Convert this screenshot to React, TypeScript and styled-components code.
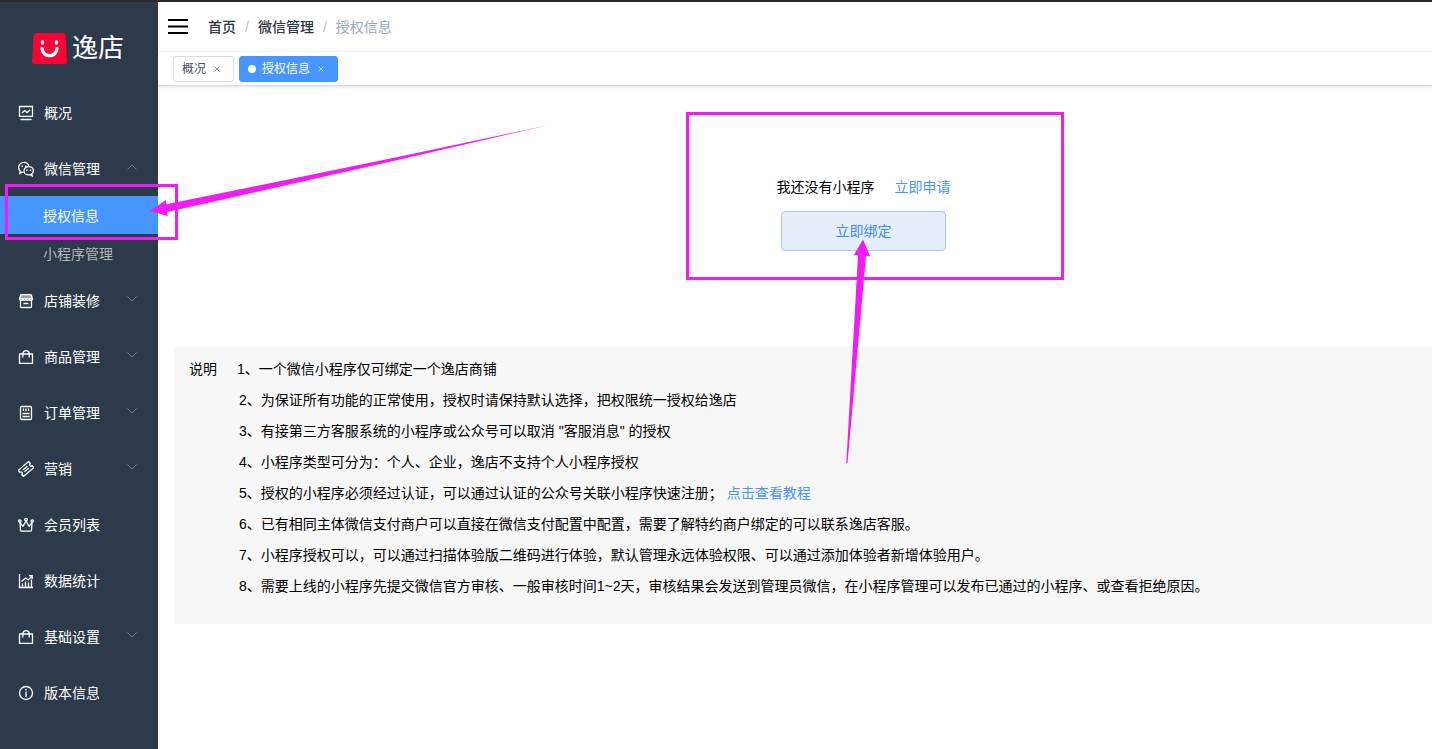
import React from 'react';
import styled, { createGlobalStyle } from 'styled-components';

const GlobalStyle = createGlobalStyle`
  *, *::before, *::after { box-sizing: border-box; }
  body {
    margin: 0;
    background: #fff;
    color: #000;
    font-family: "Liberation Sans", "Noto Sans CJK SC", sans-serif;
    font-size: 14px;
    overflow: hidden;
  }
  button { font-family: inherit; cursor: pointer; }
  a { text-decoration: none; }
`;

const Page = styled.div`
  position: relative;
  display: flex;
  min-height: 100vh;
  border-top: 2px solid #2b2b2b;
  overflow: hidden;
`;

const Sidebar = styled.aside`
  flex: 0 0 158px;
  background: #2d3a4b;
`;

const Brand = styled.a`
  display: flex;
  align-items: center;
  gap: 5px;
  height: 82px;
  padding: 10px 0 0 32px;
  color: #fff;
  font-size: 26px;
  line-height: 36px;
`;

const MenuItem = styled.a`
  display: flex;
  align-items: center;
  height: 56px;
  padding: 2px 20px 0 18px;
  color: #fff;
  line-height: 20px;
`;

const MenuIcon = styled.svg`
  flex: none;
  width: 16px;
  height: 16px;
  margin-right: 10px;
  fill: none;
  stroke: #fff;
  stroke-width: 1.3;
`;

const MenuLabel = styled.span`
  flex: 1;
`;

const Chevron = styled.svg`
  width: 12px;
  height: 12px;
  margin-bottom: 4px;
  fill: none;
  stroke: #727a86;
`;

const SubItem = styled.a<{ $active?: boolean }>`
  display: flex;
  align-items: center;
  height: 38px;
  padding: 2px 0 0 43px;
  line-height: 20px;
  color: ${(p) => (p.$active ? '#fff' : '#b3b5b8')};
  background: ${(p) => (p.$active ? '#4796ff' : 'transparent')};
`;

const Main = styled.main`
  flex: 1;
  min-width: 0;
`;

const Header = styled.header`
  display: flex;
  align-items: center;
  height: 50px;
  padding-left: 10px;
  border-bottom: 1px solid #f3f4f6;
`;

const MenuToggle = styled.button`
  display: flex;
  padding: 0;
  margin-right: 20px;
  border: 0;
  background: none;
`;

const Breadcrumb = styled.nav`
  display: flex;
  line-height: 20px;
`;

const Crumb = styled.a`
  color: #303643;
  font-weight: 500;
`;

const CurrentCrumb = styled.span`
  color: #97a8be;
`;

const Separator = styled.span`
  margin: 0 9px;
  color: #b8bdc6;
`;

const Tabs = styled.div`
  display: flex;
  align-items: center;
  gap: 5px;
  height: 34px;
  padding-left: 15px;
  border-bottom: 1px solid #d8dce5;
  box-shadow: 0 1px 3px rgba(0, 0, 0, 0.12);
`;

const Tab = styled.div<{ $active?: boolean }>`
  display: flex;
  align-items: center;
  height: 26px;
  padding: 1px 8px 0;
  border: 1px solid ${(p) => (p.$active ? '#4796ff' : '#d8dce5')};
  border-radius: 3px;
  background: ${(p) => (p.$active ? '#4796ff' : '#fff')};
  color: ${(p) => (p.$active ? '#fff' : '#495060')};
  font-size: 12px;
  line-height: 24px;
`;

const TabDot = styled.span`
  width: 8px;
  height: 8px;
  margin-right: 6px;
  border-radius: 50%;
  background: #fff;
`;

const TabClose = styled.button`
  display: flex;
  align-items: center;
  justify-content: center;
  width: 16px;
  height: 16px;
  margin-left: 3px;
  padding: 0;
  border: 0;
  background: none;
  color: inherit;
  opacity: 0.75;
`;

const BindSection = styled.section`
  display: flex;
  flex-direction: column;
  align-items: center;
  gap: 14px;
  height: 260px;
  padding: 91px 0 0 137px;
`;

const BindPrompt = styled.div`
  display: flex;
  gap: 20px;
  line-height: 20px;
`;

const TextLink = styled.a`
  color: #4796ff;
`;

const BindButton = styled.button`
  width: 165px;
  height: 40px;
  padding: 0 0 2px;
  border: 1px solid #a0cbfb;
  border-radius: 4px;
  background: #e5eefa;
  color: #3d8bf8;
  font-size: 14px;
`;

const Notes = styled.section`
  display: flex;
  gap: 20px;
  margin-left: 16px;
  padding: 8px 15px 22px;
  background: #f7f7f7;
  line-height: 31px;
`;

const NotesTitle = styled.h2`
  flex: none;
  margin: 0;
  font-size: 14px;
  font-weight: 400;
`;

const NotesList = styled.ul`
  margin: 0;
  padding: 0 0 0 2px;
  list-style: none;

  li:first-child { margin-left: -2px; }
`;

const InlineLink = styled(TextLink)`
  margin-left: 4px;
`;

const Annotations = styled.svg`
  position: absolute;
  top: -2px;
  left: 0;
  pointer-events: none;
`;

const bag = (
  <>
    <path d="M1.500 5h13v9.400h-13z" />
    <path d="M4.800 8.500V4.800a3.200 3.200 0 0 1 6.400 0v3.700" />
  </>
);

const icons: Record<string, React.ReactNode> = {
  overview: (
    <>
      <path d="M1.500 1.500h13v9.900h-13zM2.500 14.500h11" />
      <path d="M4 8l2.800-2.600L9 7.600 12 5" />
    </>
  ),
  wechat: (
    <>
      <path d="M5.400 11.400c-.7 0-1.200-.1-1.800-.3L1.900 12.300l.4-2.100C1.200 9.300.6 8 .6 6.500.6 3.700 2.900 1.300 5.800 1.300c2.600 0 4.700 1.500 5.100 4" />
      <path d="M10.700 5.600c2.600 0 4.700 1.800 4.700 4.100 0 1.300-.6 2.300-1.600 3l.4 2.200-1.800-1.200c-.5.200-1.100.2-1.700.2-2.600 0-4.700-1.900-4.700-4.200s2.100-4.100 4.700-4.100z" />
      <path d="M3.600 5.200H5M7 5.200h1.400M8.200 9.300h1.400M11.800 9.300h1.400" strokeWidth="1.500" />
    </>
  ),
  shop: (
    <>
      <path d="M3.500 1.600h9a1 1 0 0 1 1 .8l.9 3.400H1.600l.9-3.400a1 1 0 0 1 1-.8z" fill="#ffffff88" />
      <path d="M1.600 5.800c0 2.200 3.200 2.200 3.200 0 0 2.200 3.200 2.200 3.200 0 0 2.200 3.200 2.200 3.200 0 0 2.200 3.200 2.200 3.200 0M2.500 7.500v6a1 1 0 0 0 1 1h9a1 1 0 0 0 1-1v-6M5.500 10.500h5" />
    </>
  ),
  bag,
  order: (
    <>
      <rect x="2.500" y="1.500" width="11" height="13" rx="1.200" />
      <path d="M5.500 3.500v2.500M8 3.500v2.500M10.500 3.500v2.500M4.500 8.500h7M4.500 11.500h7" />
    </>
  ),
  ticket: (
    <g transform="rotate(-40 8 8)">
      <path d="M1.200 4h13.600v2.500a1.500 1.500 0 0 0 0 3V12H1.200V9.500a1.500 1.500 0 0 0 0-3z" strokeLinejoin="round" />
      <path d="M5 6.800h6M5 9.200h6" />
    </g>
  ),
  crown: (
    <>
      <path d="M2 5.500l.5 7.600a1.200 1.200 0 0 0 1.200 1.100h8.600a1.200 1.200 0 0 0 1.200-1.100L14 5.500l-3 3.800L8 4 5 9.300z" strokeLinejoin="round" />
      <circle cx="1.800" cy="4" r="1.200" />
      <circle cx="8" cy="2.600" r="1.300" />
      <circle cx="14.200" cy="4" r="1.200" />
    </>
  ),
  chart: (
    <>
      <path d="M1.500 1v13.500H15M4.500 14v-3.500M7.500 14V8.500M10.500 14V9.500M13.500 14V6.500" />
      <path d="M3.500 8.500l4-3.500 2.800 2L14 3M11 2.700h3.200V6" />
    </>
  ),
  info: (
    <>
      <circle cx="8" cy="8" r="6.500" />
      <path d="M8 6.800V12M8 4v1.500" />
    </>
  ),
};

type Item = { label: string; icon: string; arrow?: 'up' | 'down'; children?: string[] };

const menu: Item[] = [
  { label: '概况', icon: 'overview' },
  { label: '微信管理', icon: 'wechat', arrow: 'up', children: ['授权信息', '小程序管理'] },
  { label: '店铺装修', icon: 'shop', arrow: 'down' },
  { label: '商品管理', icon: 'bag', arrow: 'down' },
  { label: '订单管理', icon: 'order', arrow: 'down' },
  { label: '营销', icon: 'ticket', arrow: 'down' },
  { label: '会员列表', icon: 'crown' },
  { label: '数据统计', icon: 'chart' },
  { label: '基础设置', icon: 'bag', arrow: 'down' },
  { label: '版本信息', icon: 'info' },
];

const notes: React.ReactNode[] = [
  '1、一个微信小程序仅可绑定一个逸店商铺',
  '2、为保证所有功能的正常使用，授权时请保持默认选择，把权限统一授权给逸店',
  '3、有接第三方客服系统的小程序或公众号可以取消 "客服消息" 的授权',
  '4、小程序类型可分为：个人、企业，逸店不支持个人小程序授权',
  <>
    5、授权的小程序必须经过认证，可以通过认证的公众号关联小程序快速注册；
    <InlineLink href="#tutorial">点击查看教程</InlineLink>
  </>,
  '6、已有相同主体微信支付商户可以直接在微信支付配置中配置，需要了解特约商户绑定的可以联系逸店客服。',
  '7、小程序授权可以，可以通过扫描体验版二维码进行体验，默认管理永远体验权限、可以通过添加体验者新增体验用户。',
  '8、需要上线的小程序先提交微信官方审核、一般审核时间1~2天，审核结果会发送到管理员微信，在小程序管理可以发布已通过的小程序、或查看拒绝原因。',
];

const CloseIcon = () => (
  <svg width="6" height="6" viewBox="0 0 6 6" fill="none" stroke="currentColor" strokeWidth="0.800">
    <path d="M.5.5l5 5M5.500.5l-5 5" />
  </svg>
);

export default function App() {
  return (
    <>
      <GlobalStyle />
      <Page>
        <Sidebar>
          <Brand href="#home">
            <svg width="35" height="31" viewBox="0 0 35 31" fill="none">
              <path d="M4 0h27a2.500 2.500 0 0 1 2.500 2.200L35 28.500A2.500 2.500 0 0 1 32.500 31h-30A2.500 2.500 0 0 1 0 28.500L1.500 2.200A2.500 2.500 0 0 1 4 0z" fill="#fc0336" />
              <path d="M10.500 9v1M24.500 9v1M10 15.500c1 9.500 14 9.500 15 0" stroke="#fff" strokeWidth="3.400" strokeLinecap="round" />
            </svg>
            逸店
          </Brand>
          <nav>
            {menu.map((item) => (
              <React.Fragment key={item.label}>
                <MenuItem href="#menu">
                  <MenuIcon viewBox="0 0 16 16">{icons[item.icon]}</MenuIcon>
                  <MenuLabel>{item.label}</MenuLabel>
                  {item.arrow && (
                    <Chevron viewBox="0 0 12 12">
                      <path d={item.arrow === 'up' ? 'M1.500 8.500L6 4l4.500 4.500' : 'M1.500 3.500L6 8l4.500-4.500'} />
                    </Chevron>
                  )}
                </MenuItem>
                {item.children?.map((child, i) => (
                  <SubItem key={child} href="#submenu" $active={i === 0}>
                    {child}
                  </SubItem>
                ))}
              </React.Fragment>
            ))}
          </nav>
        </Sidebar>
        <Main>
          <Header>
            <MenuToggle aria-label="菜单">
              <svg width="20" height="18" viewBox="0 0 20 18" stroke="#000" strokeWidth="2">
                <path d="M0 2h20M0 8.500h20M0 15h20" />
              </svg>
            </MenuToggle>
            <Breadcrumb>
              <Crumb href="#home">首页</Crumb>
              <Separator>/</Separator>
              <Crumb href="#wechat">微信管理</Crumb>
              <Separator>/</Separator>
              <CurrentCrumb>授权信息</CurrentCrumb>
            </Breadcrumb>
          </Header>
          <Tabs>
            <Tab>
              概况
              <TabClose aria-label="关闭概况"><CloseIcon /></TabClose>
            </Tab>
            <Tab $active>
              <TabDot />
              授权信息
              <TabClose aria-label="关闭授权信息"><CloseIcon /></TabClose>
            </Tab>
          </Tabs>
          <BindSection>
            <BindPrompt>
              <span>我还没有小程序</span>
              <TextLink href="#apply">立即申请</TextLink>
            </BindPrompt>
            <BindButton>立即绑定</BindButton>
          </BindSection>
          <Notes>
            <NotesTitle>说明</NotesTitle>
            <NotesList>
              {notes.map((note, i) => (
                <li key={i}>{note}</li>
              ))}
            </NotesList>
          </Notes>
        </Main>
        <Annotations width="1070" height="470" viewBox="0 0 1070 470" fill="#f31bf3" aria-hidden="true">
          <path d="M6.500 185.500h170v53H6.500zM687.500 113.500h375v165h-375z" fill="none" stroke="#f31bf3" strokeWidth="3" />
          <path d="M150 211l15.700-11 .8 4.300L400 156.500 549 125 400 159.500 167.300 212l.5 4z" />
          <path d="M863 239.500l7.200 17-4.200-.7-18.500 207.200h-1.200L858 255.500l-4.200-.5z" />
        </Annotations>
      </Page>
    </>
  );
}
